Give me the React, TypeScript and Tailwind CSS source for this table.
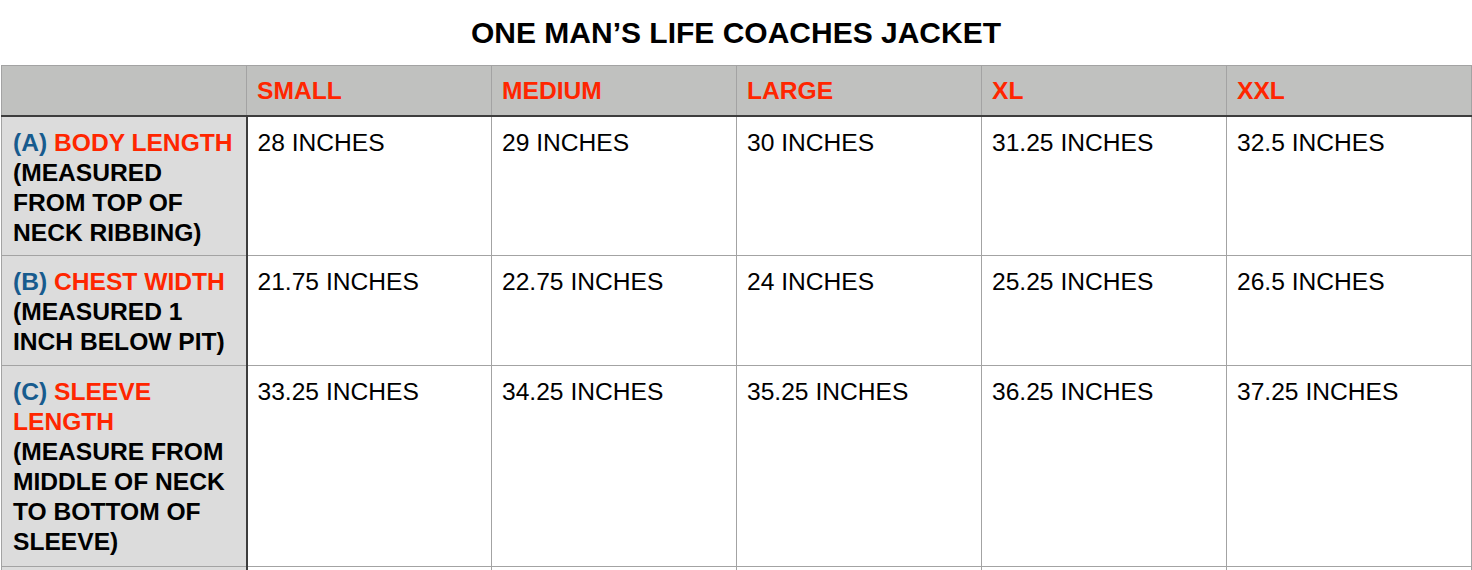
const sizes = ["SMALL", "MEDIUM", "LARGE", "XL", "XXL"]

type Row = {
  letter: string
  name: string[]
  note: string[]
  values: string[]
  height: string
}

const rows: Row[] = [
  {
    letter: "(A)",
    name: ["BODY LENGTH"],
    note: ["(MEASURED", "FROM TOP OF", "NECK RIBBING)"],
    values: ["28 INCHES", "29 INCHES", "30 INCHES", "31.25 INCHES", "32.5 INCHES"],
    height: "h-[140px]",
  },
  {
    letter: "(B)",
    name: ["CHEST WIDTH"],
    note: ["(MEASURED 1", "INCH BELOW PIT)"],
    values: ["21.75 INCHES", "22.75 INCHES", "24 INCHES", "25.25 INCHES", "26.5 INCHES"],
    height: "h-[110px]",
  },
  {
    letter: "(C)",
    name: ["SLEEVE", "LENGTH"],
    note: ["(MEASURE FROM", "MIDDLE OF NECK", "TO BOTTOM OF", "SLEEVE)"],
    values: ["33.25 INCHES", "34.25 INCHES", "35.25 INCHES", "36.25 INCHES", "37.25 INCHES"],
    height: "h-[201px]",
  },
]

export default function App() {
  return (
    <div className="min-h-screen bg-white font-['Liberation_Sans',Arial,sans-serif] text-black">
      {/* Title */}
      <div className="flex h-[65px] items-center justify-center">
        <h1 className="text-[30px] font-bold leading-none">ONE MAN’S LIFE COACHES JACKET</h1>
      </div>

      {/* Size chart */}
      <table className="ml-px w-[1471px] table-fixed border-collapse text-[24.6px] leading-[30px]">
        <colgroup>
          <col className="w-[245px]" />
          {sizes.map((s) => (
            <col key={s} className="w-[245px]" />
          ))}
        </colgroup>
        <thead>
          <tr className="h-[50px] bg-[#c0c1bf]">
            <th className="border border-b-2 border-[#a3a3a3] border-b-[#3d3d3d]" />
            {sizes.map((s) => (
              <th
                key={s}
                className="border border-b-2 border-[#a3a3a3] border-b-[#3d3d3d] px-[10px] pt-[2px] text-left align-middle font-bold text-[#ff2600]"
              >
                {s}
              </th>
            ))}
          </tr>
        </thead>
        <tbody>
          {rows.map((row) => (
            <tr key={row.letter} className={row.height}>
              <td className="whitespace-nowrap border border-r-2 border-[#a3a3a3] border-r-[#3d3d3d] bg-[#dcdcdc] pl-[11px] pt-[11px] pb-[4px] align-top font-bold">
                <div>
                  <span className="text-[#175b8e]">{row.letter}</span>{" "}
                  <span className="text-[#ff2600]">{row.name[0]}</span>
                </div>
                {row.name.slice(1).map((n) => (
                  <div key={n} className="text-[#ff2600]">
                    {n}
                  </div>
                ))}
                {row.note.map((n) => (
                  <div key={n}>{n}</div>
                ))}
              </td>
              {row.values.map((v, i) => (
                <td key={i} className="border border-[#a3a3a3] px-[10px] pt-[11px] pb-[4px] align-top">
                  {v}
                </td>
              ))}
            </tr>
          ))}
          <tr className="h-[60px]">
            <td className="border border-r-2 border-[#a3a3a3] border-r-[#3d3d3d] bg-[#dcdcdc]" />
            {sizes.map((s) => (
              <td key={s} className="border border-[#a3a3a3]" />
            ))}
          </tr>
        </tbody>
      </table>
    </div>
  )
}
